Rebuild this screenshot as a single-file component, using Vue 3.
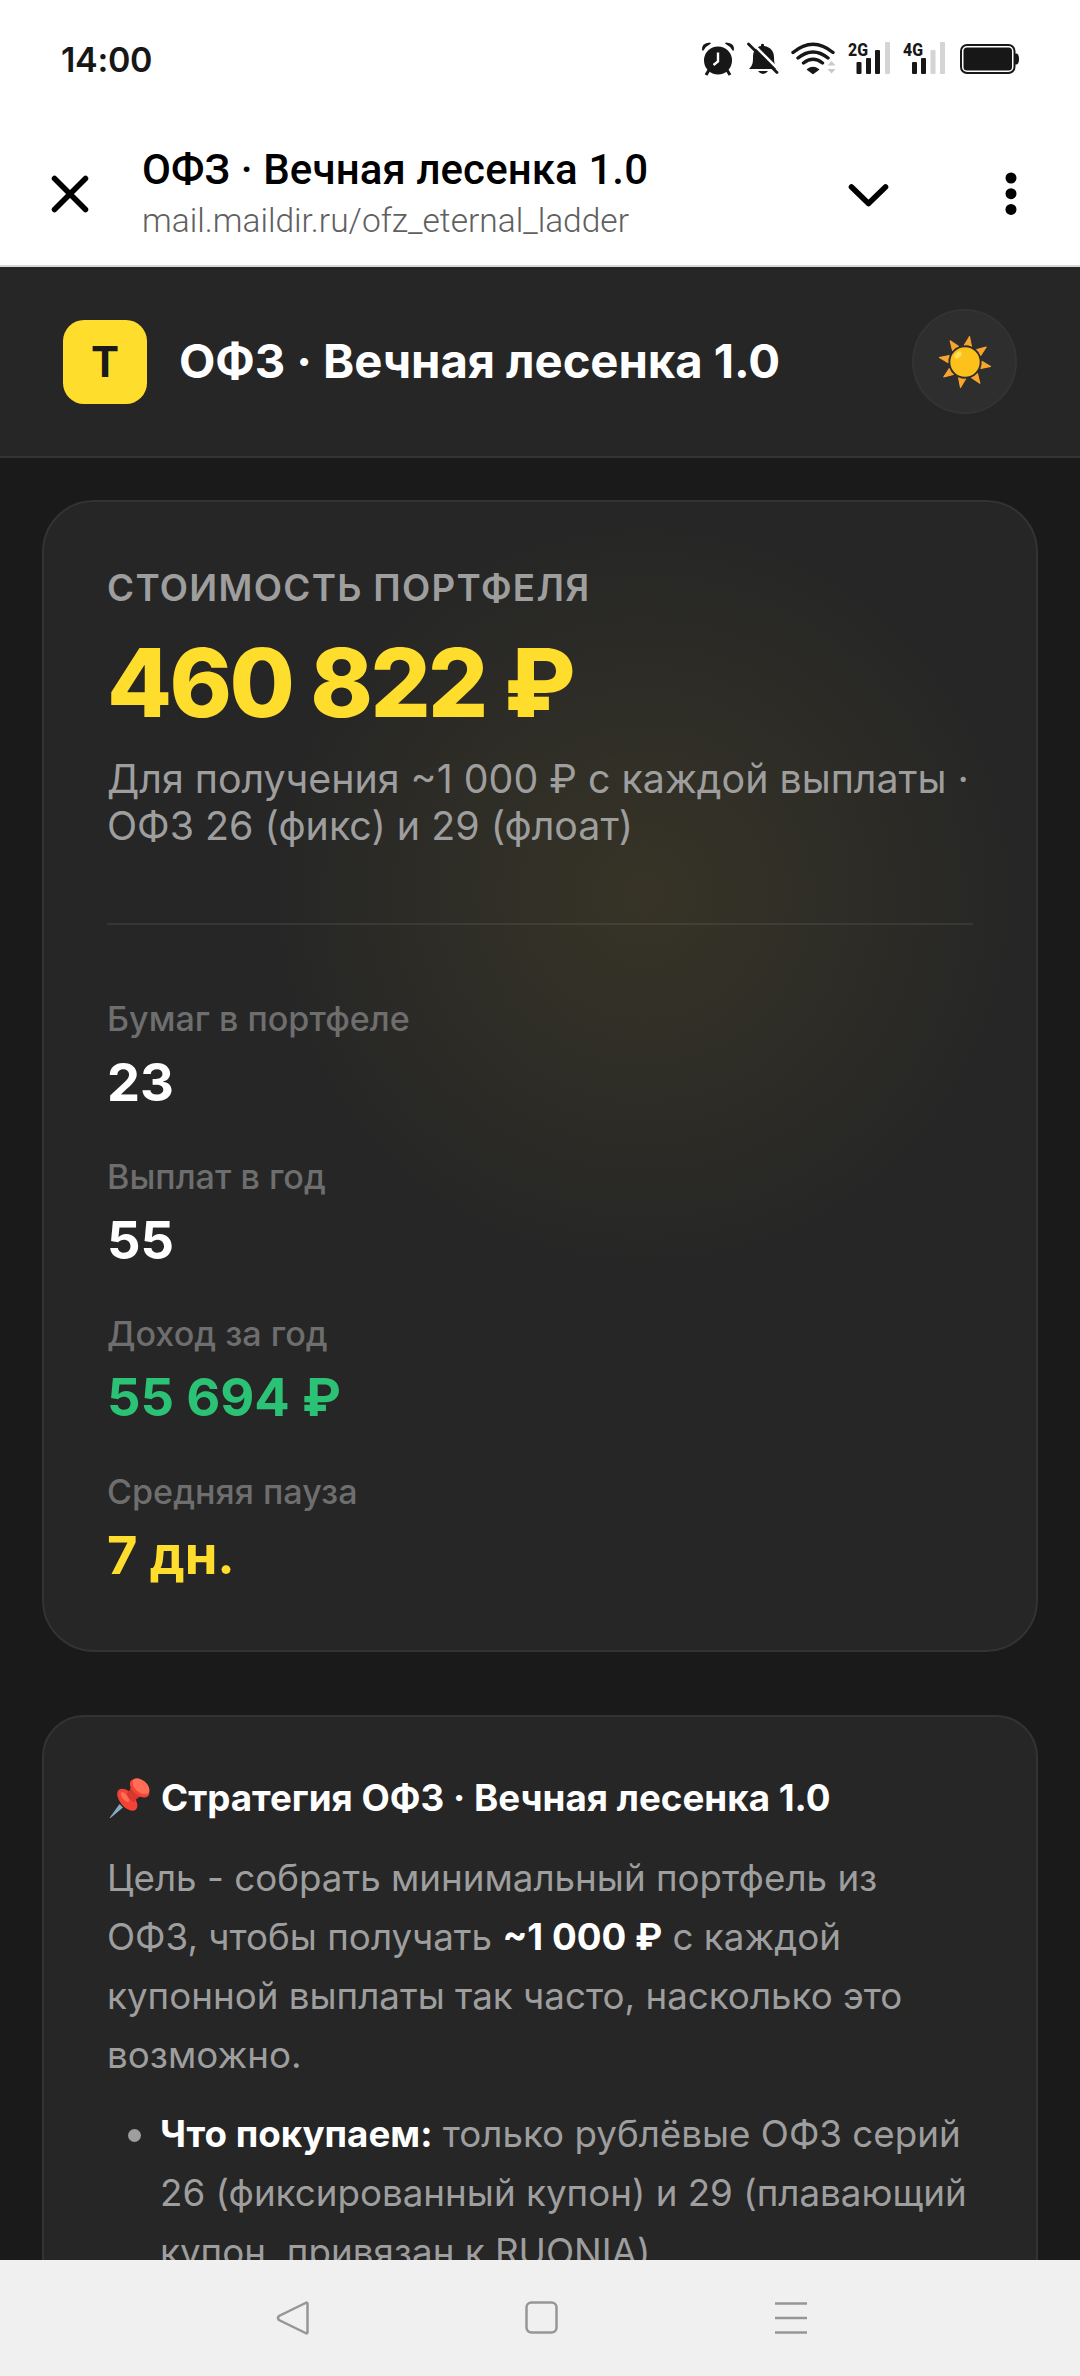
<script setup>
const stats = [
  { label: 'Бумаг в портфеле', value: '23', tone: 'white' },
  { label: 'Выплат в год', value: '55', tone: 'white' },
  { label: 'Доход за год', value: '55 694 ₽', tone: 'green' },
  { label: 'Средняя пауза', value: '7 дн.', tone: 'yellow' },
]
const rays = [10, 55, 100, 145, 190, 235, 280, 325]
</script>

<template>
  <div class="screen">
    <header class="status">
      <span class="time">14:00</span>
      <svg class="status-icons" width="340" height="40" viewBox="0 0 340 40">
        <g fill="#171717">
          <circle cx="17" cy="21.500" r="14" />
          <path d="M1 11.500Q0 4 9 3.500L10 4.500Q5 7 2.500 11.500ZM33 11.500Q34 4 25 3.500L24 4.500Q29 7 31.500 11.500Z" />
          <path d="M8 31L5 36M26 31L29 36" stroke="#171717" stroke-width="3" />
          <path d="M17 13.500V22.500L12.500 26" fill="none" stroke="#fff" stroke-width="2.400" />
          <path d="M48 30C52 26 52 23 52 18C52 11 56 7.500 60 7V5.500Q61.500 4 63 5.500V7C70 8 73 13 73 18C73 24 74 27 77 30Z" />
          <path d="M57 32H67Q65 35 62 35Q59 35 57 32Z" />
          <path d="M50.500 3.500L79 32" stroke="#fff" stroke-width="2.500" />
          <path d="M47.500 5L76 33.500" stroke="#171717" stroke-width="2.800" stroke-linecap="round" />
          <path d="M106.500 30.500Q112 26.500 117.500 30.500L112 34.500Z" stroke="#171717" stroke-width="1.500" stroke-linejoin="round" />
        </g>
        <g fill="none" stroke="#171717" stroke-width="3.400" stroke-linecap="round">
          <path d="M92 13.500Q112 -3 132 13.500M97 19Q112 7 127 19M102.500 24Q112 16.500 121.500 24" />
        </g>
        <path d="M126.500 26.500L130.500 22L134.500 26.500ZM126.500 30L130.500 34.500L134.500 30Z" fill="#c9c9c9" />
        <g fill="#171717">
          <text x="147" y="16.500" font-family="Roboto, sans-serif" font-size="19" font-weight="800" textLength="20" lengthAdjust="spacingAndGlyphs">2G</text>
          <text x="202" y="16.500" font-family="Roboto, sans-serif" font-size="19" font-weight="800" textLength="20" lengthAdjust="spacingAndGlyphs">4G</text>
          <rect x="155.500" y="23" width="5" height="12" rx="1" />
          <rect x="165" y="19" width="5" height="16" rx="1" />
          <rect x="174" y="11" width="5" height="24" rx="1" />
          <rect x="211" y="23" width="5" height="12" rx="1" />
          <rect x="220" y="19" width="5" height="16" rx="1" />
        </g>
        <g fill="#d4d4d4">
          <rect x="184" y="3" width="5" height="32" rx="1" />
          <rect x="229.500" y="11" width="5" height="24" rx="1" />
          <rect x="239" y="3" width="5" height="32" rx="1" />
        </g>
        <rect x="260" y="6" width="53.500" height="28" rx="6" fill="none" stroke="#171717" stroke-width="2" />
        <rect x="262.500" y="8.500" width="48.500" height="23" rx="3.500" fill="#171717" />
        <path d="M314 14.500H315.500Q318 15 318 20Q318 25 315.500 25.500H314Z" fill="#171717" />
      </svg>
    </header>

    <nav class="browser">
      <svg class="close" width="38" height="38" viewBox="0 0 38 38">
        <path d="M3.500 3.500L34.500 34.500M34.500 3.500L3.500 34.500" fill="none" stroke="#000" stroke-width="5.500" stroke-linecap="round" />
      </svg>
      <div class="page-info">
        <div class="page-title">ОФЗ · Вечная лесенка 1.0</div>
        <div class="page-url">mail.maildir.ru/ofz_eternal_ladder</div>
      </div>
      <svg class="chevron" width="42" height="26" viewBox="0 0 42 26">
        <path d="M3.500 4L20.500 20.500L37.500 4" fill="none" stroke="#000" stroke-width="5.600" stroke-linecap="round" stroke-linejoin="round" />
      </svg>
      <svg class="dots" width="12" height="44" viewBox="0 0 12 44">
        <circle cx="6" cy="6" r="5.500" /><circle cx="6" cy="21.700" r="5.500" /><circle cx="6" cy="37.400" r="5.500" />
      </svg>
    </nav>

    <main class="page">
      <div class="app-bar">
        <div class="logo">T</div>
        <h1 class="app-title">ОФЗ · Вечная лесенка 1.0</h1>
        <button class="theme">
          <svg width="60" height="60" viewBox="-30 -30 60 60">
            <path v-for="a in rays" :key="a" d="M-3.600 -16.700L0 -26L3.600 -16.700Q0 -17.800 -3.600 -16.700Z" fill="#f9a52f" stroke="#f9a52f" stroke-width="1" stroke-linejoin="round" :transform="`rotate(${a})`" />
            <circle r="14.700" fill="#fcc21b" />
            <ellipse cx="-7" cy="-7" rx="4.200" ry="2.600" fill="#fde05a" transform="rotate(-45 -7 -7)" />
          </svg>
        </button>
      </div>

      <div class="content">
        <section class="card hero">
          <div class="hero-label">Стоимость портфеля</div>
          <div class="hero-value">460 822 ₽</div>
          <div class="hero-sub">Для получения ~1 000 ₽ с каждой выплаты ·<br>ОФЗ 26 (фикс) и 29 (флоат)</div>
          <div class="stats">
            <div v-for="s in stats" :key="s.label" class="stat">
              <div class="stat-label">{{ s.label }}</div>
              <div class="stat-value" :class="s.tone">{{ s.value }}</div>
            </div>
          </div>
        </section>

        <section class="card strategy">
          <h2 class="strategy-title">
            <svg class="pin" width="44" height="44" viewBox="0 0 44 44">
              <path d="M2.500 42L12.500 28L16 31.500L3.500 42Z" fill="#82aec0" />
              <ellipse cx="20.300" cy="23.700" rx="13" ry="7.300" transform="rotate(50 20.300 23.700)" fill="#f44336" />
              <ellipse cx="18" cy="21" rx="6" ry="2.600" transform="rotate(52 18 21)" fill="#ff6e55" />
              <path d="M24 9Q24 14 19.500 18Q22 24 27 26Q30 21 36 20Z" fill="#d9362f" />
              <ellipse cx="32.600" cy="12.300" rx="11.500" ry="6.800" transform="rotate(42 32.600 12.300)" fill="#f44336" />
              <ellipse cx="34" cy="10.300" rx="10" ry="6" transform="rotate(42 34 10.300)" fill="#ff6e55" />
            </svg>
            <span>Стратегия ОФЗ · Вечная лесенка 1.0</span>
          </h2>
          <p class="text">Цель - собрать минимальный портфель из<br>ОФЗ, чтобы получать <b>~1 000 ₽</b> с каждой<br>купонной выплаты так часто, насколько это<br>возможно.</p>
          <ul class="list">
            <li><i class="bullet"></i><span><b>Что покупаем:</b> только рублёвые ОФЗ серий<br>26 (фиксированный купон) и 29 (плавающий<br>купон, привязан к RUONIA)</span></li>
          </ul>
        </section>
      </div>
    </main>

    <footer class="system-nav">
      <svg width="34" height="36" viewBox="0 0 34 36"><path d="M31.500 3.500V32.500Q31 34 29.500 33L3 20Q1 18 3 16L29.500 3Q31 2 31.500 3.500Z" /></svg>
      <svg width="34" height="36" viewBox="0 0 34 36"><rect x="1.500" y="2.500" width="30" height="30" rx="5" /></svg>
      <svg width="34" height="36" viewBox="0 0 34 36"><path d="M1 3.500H33M1 18H33M1 32.500H33" /></svg>
    </footer>
  </div>
</template>

<style>
html, body { margin: 0; background: #1a1a1a; }
</style>

<style scoped>
.screen {
  display: flex;
  flex-direction: column;
  width: 1080px;
  height: 2376px;
  overflow: hidden;
  background: #1a1a1a;
  font-family: Inter, "Noto Sans", sans-serif;
}
.status {
  display: flex;
  align-items: center;
  justify-content: space-between;
  flex: none;
  height: 118px;
  box-sizing: border-box;
  padding: 0 39px 0 61px;
  background: #fff;
}
.time { font-size: 34px; font-weight: 600; letter-spacing: -0.3px; color: #171717; }
.browser {
  display: flex;
  align-items: center;
  flex: none;
  height: 149px;
  box-sizing: border-box;
  border-bottom: 2px solid #d6d9d8;
  background: #fff;
  font-family: Roboto, sans-serif;
}
.close { margin-left: 51px; margin-top: 4px; }
.page-info { width: 640px; margin-left: 53px; margin-top: 9px; white-space: nowrap; }
.page-title { font-size: 42px; line-height: 50px; font-weight: 500; letter-spacing: 0.1px; color: #000; }
.page-url { font-size: 33.5px; line-height: 52px; font-weight: 300; color: #606060; }
.chevron { margin-left: 66px; margin-top: 8px; }
.dots { margin-left: 115px; margin-top: 4px; }
.page { flex: 1; min-height: 0; overflow: hidden; }
.app-bar {
  display: flex;
  align-items: center;
  padding: 42px 63px;
  border-bottom: 2px solid #333;
  background: #262626;
}
.logo {
  display: flex;
  align-items: center;
  justify-content: center;
  width: 84px;
  height: 84px;
  border-radius: 21px;
  background: #ffdd2d;
  color: #1a1a1a;
  font-size: 42px;
  font-weight: 700;
}
.app-title {
  flex: 1;
  margin: -2px 0 0 32px;
  color: #fff;
  font-size: 47.25px;
  font-weight: 700;
  letter-spacing: -0.08px;
  white-space: nowrap;
}
.theme {
  display: flex;
  align-items: center;
  justify-content: center;
  width: 105px;
  height: 105px;
  padding: 0;
  border: 2px solid #333;
  border-radius: 50%;
  background: #2e2e2e;
}
.content { display: flex; flex-direction: column; gap: 63px; padding: 42px; }
.card {
  box-sizing: border-box;
  padding: 63px;
  border: 2px solid #333;
  background-color: #262626;
  white-space: nowrap;
}
.hero {
  height: 1152px;
  border-radius: 52px;
  background-image: radial-gradient(circle 375px at 600px 393px, rgba(255, 221, 45, 0.08), rgba(255, 221, 45, 0));
}
.hero-label {
  margin-top: 1px;
  color: #9e9e9e;
  font-size: 36.75px;
  line-height: 44px;
  font-weight: 600;
  letter-spacing: 1.3px;
  text-transform: uppercase;
}
.hero-value {
  margin-top: 21px;
  color: #ffdd2d;
  font-size: 94.5px;
  line-height: 104px;
  font-weight: 800;
  letter-spacing: -2.6px;
}
.hero-sub { margin-top: 20px; color: #9e9e9e; font-size: 39.375px; line-height: 47px; }
.stats {
  display: flex;
  flex-direction: column;
  gap: 42px;
  margin-top: 74px;
  padding-top: 73px;
  border-top: 2px solid rgba(255, 255, 255, 0.07);
}
.stat { height: 115.5px; }
.stat-label { color: #6e6e6e; font-size: 34.125px; line-height: 41px; font-weight: 500; }
.stat-value { margin-top: 12px; font-size: 52.5px; line-height: 63px; font-weight: 700; letter-spacing: -0.1px; }
.white { color: #fff; }
.green { color: #2bc275; }
.yellow { color: #ffdd2d; }
.strategy { height: 700px; padding-top: 59px; border-radius: 42px; }
.strategy-title {
  display: flex;
  align-items: center;
  gap: 10px;
  margin: 0;
  color: #fff;
  font-size: 36.75px;
  line-height: 44px;
  font-weight: 700;
}
.text { margin: 28px 0 0; color: #9e9e9e; font-size: 36.75px; line-height: 59px; }
.text b, .list b { color: #fff; font-weight: 700; }
.list { margin: 20px 0 0; padding: 0; list-style: none; color: #9e9e9e; font-size: 36.75px; line-height: 59px; }
.list li { display: flex; }
.bullet { flex: none; width: 13px; height: 13px; margin: 25px 19px 0 21px; border-radius: 50%; background: #9e9e9e; }
.system-nav {
  display: flex;
  align-items: center;
  gap: 215px;
  flex: none;
  height: 116px;
  box-sizing: border-box;
  padding: 0 0 1px 276px;
  background: #f0f0f0;
}
.system-nav svg { fill: none; stroke: #969696; stroke-width: 2.5; }
</style>
